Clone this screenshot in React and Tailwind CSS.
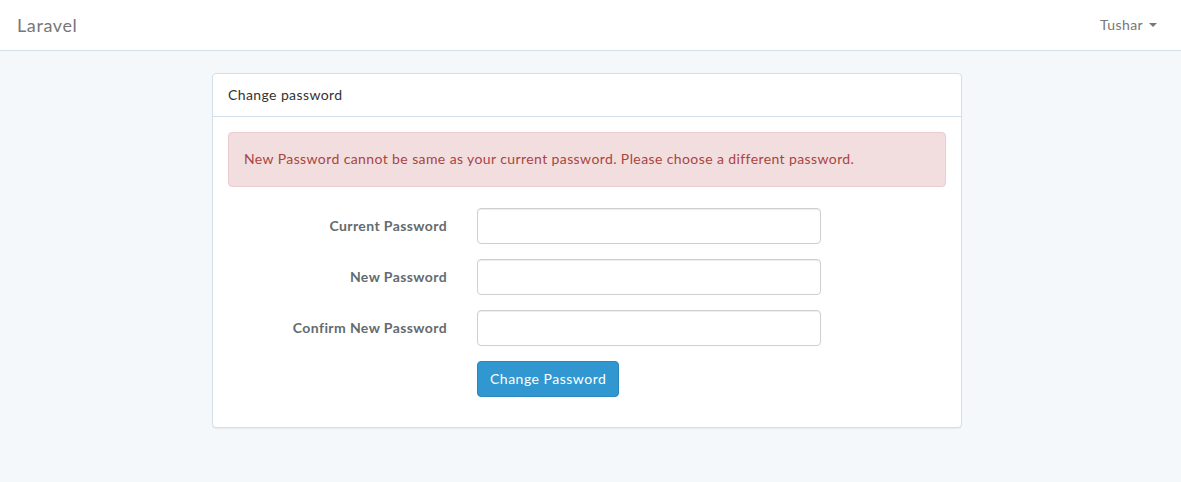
export default function App() {
  const fields = ["Current Password", "New Password", "Confirm New Password"];
  return (
    <div className="min-h-[482px] bg-[#f5f8fa] text-[14px] leading-[1.6] tracking-[0.4px] text-[#636b6f]" style={{ fontFamily: "Lato, 'Open Sans', sans-serif" }}>
      <nav className="h-[51px] bg-white border-b border-[#d3e0e9] flex items-center justify-between px-[17px]">
        <span className="text-[18px] text-[#777] tracking-[0.6px]">Laravel</span>
        <span className="flex items-center gap-[6px] text-[#777] pr-[7px]">
          Tushar
          <span className="w-0 h-0 border-l-[4px] border-r-[4px] border-t-[4px] border-l-transparent border-r-transparent border-t-[#777]" />
        </span>
      </nav>
      <div className="pt-[22px] pb-[54px]">
        <div className="ml-[212px] w-[750px] bg-white border border-[#d3e0e9] rounded-[4px] shadow-[0_1px_1px_rgba(0,0,0,0.05)]">
          <div className="px-[15px] py-[10px] border-b border-[#d3e0e9] text-[#333]">Change password</div>
          <div className="p-[15px]">
            <div className="bg-[#f2dede] border border-[#ebccd1] text-[#a94442] rounded-[4px] p-[15px] mb-[21px]">
              New Password cannot be same as your current password. Please choose a different password.
            </div>
            <div className="-mx-[15px]">
              {fields.map((f) => (
                <div key={f} className="flex items-center mb-[15px]">
                  <label className="w-[249px] px-[15px] text-right font-bold">{f}</label>
                  <div className="w-[374px] px-[15px]">
                    <input type="password" className="w-full h-[36px] border border-[#ccd0d2] rounded-[4px] bg-white px-[12px] shadow-[inset_0_1px_1px_rgba(0,0,0,0.075)] outline-none" />
                  </div>
                </div>
              ))}
              <div className="flex mb-[15px]">
                <div className="ml-[249px] px-[15px]">
                  <button className="h-[36px] px-[12px] bg-[#3097d1] border border-[#2a88bd] rounded-[4px] text-white text-[14px] tracking-[0.5px]">Change Password</button>
                </div>
              </div>
            </div>
          </div>
        </div>
      </div>
    </div>
  );
}
